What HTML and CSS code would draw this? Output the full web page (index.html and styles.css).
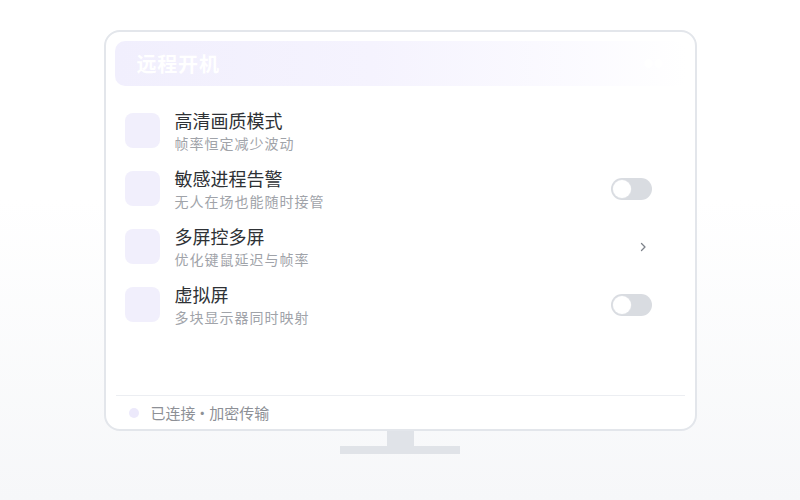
FILE: index.html
```html
<!DOCTYPE html>
<html lang="zh">
<head>
<meta charset="utf-8">
<link rel="stylesheet" href="styles.css">
</head>
<body>
<div class="scene">
  <div class="monitor">
    <div class="header">
      <span class="header-title">远程开机</span>
      <span class="header-extra">●●</span>
    </div>
    <div class="list">
      <div class="row">
        <div class="icon"></div>
        <div class="texts">
          <div class="title">高清画质模式</div>
          <div class="sub">帧率恒定减少波动</div>
        </div>
      </div>
      <div class="row">
        <div class="icon"></div>
        <div class="texts">
          <div class="title">敏感进程告警</div>
          <div class="sub">无人在场也能随时接管</div>
        </div>
        <div class="toggle"><span class="knob"></span></div>
      </div>
      <div class="row">
        <div class="icon"></div>
        <div class="texts">
          <div class="title">多屏控多屏</div>
          <div class="sub">优化键鼠延迟与帧率</div>
        </div>
        <svg class="chev" width="8" height="12" viewBox="0 0 8 12"><path d="M2.5 2.5 L6 6 L2.5 9.5" fill="none" stroke="#7d828a" stroke-width="1.3" stroke-linecap="round" stroke-linejoin="round"/></svg>
      </div>
      <div class="row">
        <div class="icon"></div>
        <div class="texts">
          <div class="title">虚拟屏</div>
          <div class="sub">多块显示器同时映射</div>
        </div>
        <div class="toggle"><span class="knob"></span></div>
      </div>
    </div>
    <div class="footer">
      <span class="dot"></span>
      <span class="status">已连接 · 加密传输</span>
    </div>
  </div>
  <div class="neck"></div>
  <div class="base"></div>
</div>
</body>
</html>
```
FILE: styles.css
```css
html, body {
  margin: 0;
  padding: 0;
}
body {
  width: 800px;
  height: 500px;
  background: linear-gradient(180deg, #ffffff 0%, #ffffff 40%, #f6f7f9 100%);
  font-family: "Noto Sans CJK SC", "Noto Sans", sans-serif;
  overflow: hidden;
}
.scene {
  display: flex;
  flex-direction: column;
  align-items: center;
  padding-top: 30px;
}
.monitor {
  width: 593px;
  height: 401px;
  box-sizing: border-box;
  border: 2px solid #e3e6eb;
  border-radius: 16px;
  background: #ffffff;
  display: flex;
  flex-direction: column;
  padding: 9px 9px 0 9px;
}
.header {
  height: 45px;
  border-radius: 10px;
  background: linear-gradient(90deg, #f1effd 0%, #f5f3fe 45%, rgba(250,249,255,0.6) 85%, rgba(255,255,255,0) 100%);
  display: flex;
  align-items: center;
  justify-content: space-between;
  padding: 0 22px 0 22px;
  flex-shrink: 0;
}
.header-title {
  color: #ffffff;
  font-size: 20px;
  font-weight: 700;
  letter-spacing: 0.8px;
}
.header-extra {
  color: #ffffff;
  font-size: 10px;
}
.list {
  flex: 1;
  display: flex;
  flex-direction: column;
  gap: 23px;
  padding: 27px 34px 0 10px;
}
.row {
  display: flex;
  align-items: flex-start;
  height: 35px;
}
.icon {
  width: 35px;
  height: 35px;
  border-radius: 8px;
  background: #f1effc;
  flex-shrink: 0;
}
.texts {
  flex: 1;
  margin-left: 15px;
  margin-top: -3px;
  display: flex;
  flex-direction: column;
}
.title {
  font-size: 18px;
  line-height: 20px;
  color: #2e3135;
}
.sub {
  font-size: 14px;
  line-height: 18px;
  margin-top: 4px;
  color: #a0a3a9;
  letter-spacing: 1px;
}
.toggle {
  width: 41px;
  height: 22px;
  border-radius: 11px;
  background: #d9dce1;
  position: relative;
  flex-shrink: 0;
  align-self: center;
}
.knob {
  position: absolute;
  left: 2px;
  top: 2px;
  width: 18px;
  height: 18px;
  border-radius: 50%;
  background: #ffffff;
  box-shadow: 0 0 0 0.5px #e4e6ea;
}
.chev {
  margin-right: 5px;
  align-self: center;
}
.footer {
  height: 33px;
  border-top: 1px solid #eceef2;
  margin: 0 1px;
  display: flex;
  align-items: center;
  padding-left: 13px;
  flex-shrink: 0;
}
.dot {
  width: 10px;
  height: 10px;
  border-radius: 50%;
  background: #ece9fb;
}
.status {
  margin-left: 12px;
  font-size: 15px;
  color: #8d9096;
  word-spacing: -4px;
}
.neck {
  width: 27px;
  height: 15px;
  background: #e0e3e8;
}
.base {
  width: 120px;
  height: 8px;
  background: #e0e3e8;
}
```
